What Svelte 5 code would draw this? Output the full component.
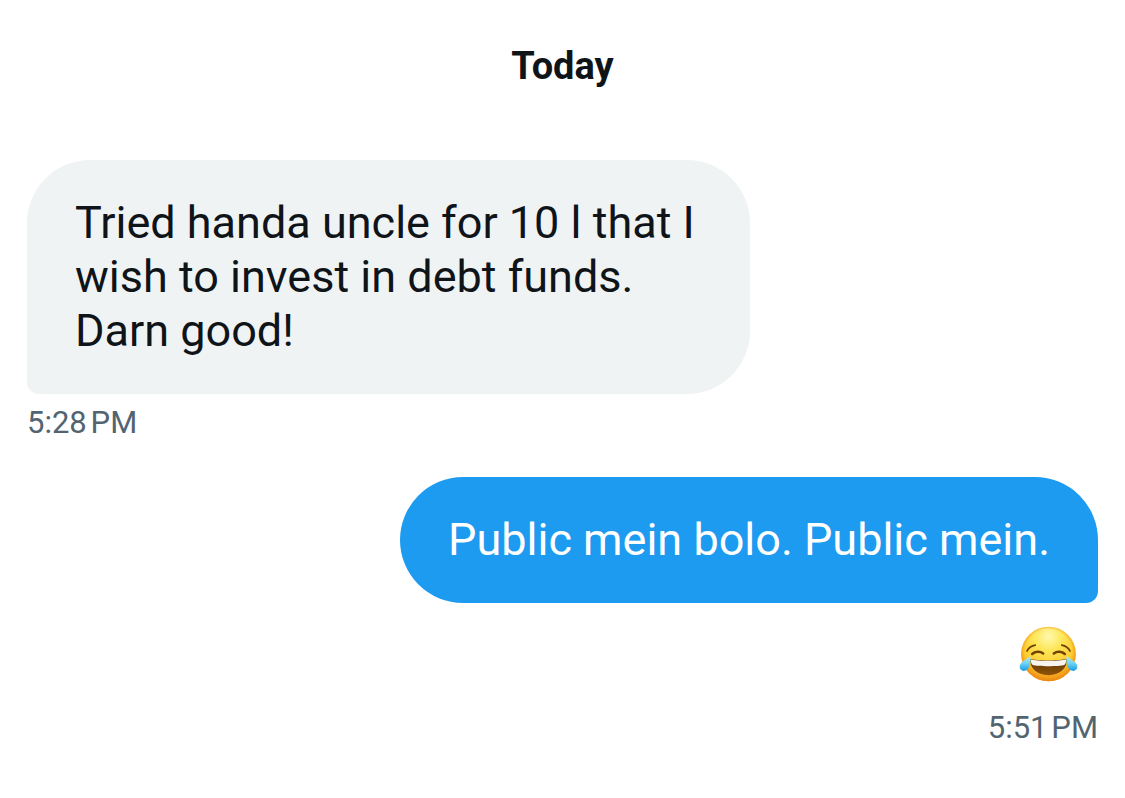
<script lang="ts">
    type Message = {
        id: number;
        own: boolean;
        text?: string;
        emoji?: boolean;
        time?: string;
    };

    export let day = "Today";

    // times carry a narrow no-break space before AM/PM
    export let messages: Message[] = [
        {
            id: 1,
            own: false,
            text: "Tried handa uncle for 10 l that I wish to invest in debt funds. Darn good!",
            time: "5:28\u202fPM",
        },
        { id: 2, own: true, text: "Public mein bolo. Public mein." },
        { id: 3, own: true, emoji: true, time: "5:51\u202fPM" },
    ];
</script>

<main class="conversation">
    <h1 class="day">{day}</h1>

    <ol class="messages">
        {#each messages as message (message.id)}
            <li class="message" class:own={message.own} class:reaction={message.emoji}>
                {#if message.emoji}
                    <svg class="emoji" viewBox="0 0 60 60" role="img" aria-label="Face with tears of joy">
                        <defs>
                            <radialGradient id="face" cx="50%" cy="18%" r="84%">
                                <stop offset="0" stop-color="#fff9b0" />
                                <stop offset="0.3" stop-color="#fee75a" />
                                <stop offset="0.65" stop-color="#fdcb2f" />
                                <stop offset="1" stop-color="#ee8b12" />
                            </radialGradient>
                            <radialGradient id="rim" cx="50%" cy="48%" r="52%">
                                <stop offset="0.82" stop-color="#f39a1b" stop-opacity="0" />
                                <stop offset="1" stop-color="#e9850f" stop-opacity="0.8" />
                            </radialGradient>
                            <linearGradient id="mouth" x1="0" y1="0" x2="0" y2="1">
                                <stop offset="0" stop-color="#5b3305" />
                                <stop offset="1" stop-color="#8f5407" />
                            </linearGradient>
                            <linearGradient id="tear" x1="0" y1="0" x2="0" y2="1">
                                <stop offset="0" stop-color="#b5ecf5" />
                                <stop offset="0.5" stop-color="#6dd2f4" />
                                <stop offset="1" stop-color="#149de6" />
                            </linearGradient>
                        </defs>
                        <circle cx="29.5" cy="30" r="27.3" fill="url(#face)" />
                        <circle cx="29.5" cy="30" r="27.3" fill="url(#rim)" />
                        <g fill="none" stroke="#6f4205" stroke-linecap="round">
                            <path d="M8 27C9.6 24.2 12.6 21.8 16.2 21.2" stroke-width="1.7" />
                            <path d="M51 27C49.4 24.2 46.4 21.8 42.8 21.2" stroke-width="1.7" />
                            <path d="M13.2 30C16 27.2 21 27 24.2 29.4" stroke-width="2.5" />
                            <path d="M34.8 29.4C38 27 43 27.2 45.8 30" stroke-width="2.5" />
                        </g>
                        <path
                            d="M11.4 34.8C17 37 42 37 47.6 34.8C48.8 43.5 41.3 51.2 29.5 51.2C17.7 51.2 10.2 43.5 11.4 34.8Z"
                            fill="url(#mouth)"
                        />
                        <path
                            d="M12.1 35.4C18.6 37.3 40.4 37.3 46.9 35.4C47.4 37.8 46.8 39.8 45.3 41C40 42.6 19 42.6 13.7 41C12.2 39.8 11.6 37.8 12.1 35.4Z"
                            fill="#f7f3ee"
                        />
                        <path
                            d="M11.2 32C12.2 37 11.4 45.4 5.8 46.8C2.2 47.4 0.2 44.8 0.8 41.6C1.6 37.8 7.2 35.8 11.2 32Z"
                            fill="url(#tear)"
                        />
                        <path
                            d="M47.8 32C46.8 37 47.6 45.4 53.2 46.8C56.8 47.4 58.8 44.8 58.2 41.6C57.4 37.8 51.8 35.8 47.8 32Z"
                            fill="url(#tear)"
                        />
                    </svg>
                {:else}
                    <p class="bubble">{message.text}</p>
                {/if}
                {#if message.time}
                    <time class="time">{message.time}</time>
                {/if}
            </li>
        {/each}
    </ol>
</main>

<style>
    :global(body) {
        margin: 0;
        background: #fff;
    }

    .conversation {
        padding: 42px 27px 48px;
        font-family: Roboto, "Liberation Sans", sans-serif;
        color: #0f1419;
    }

    .day {
        margin: 0 0 70px;
        font-size: 38px;
        font-weight: 700;
        line-height: 48px;
        text-align: center;
    }

    .messages {
        display: flex;
        flex-direction: column;
        gap: 36px;
        margin: 0;
        padding: 0;
        list-style: none;
    }

    .message {
        display: flex;
        flex-direction: column;
        align-items: flex-start;
    }
    .message.own {
        align-items: flex-end;
    }
    .message.reaction {
        margin-top: -15px;
    }

    .bubble {
        box-sizing: border-box;
        max-width: min(723px, 90%);
        margin: 0;
        padding: 36px 48px;
        border-radius: 63px 63px 63px 12px;
        background: #eff3f4;
        font-size: 45px;
        line-height: 54px;
    }
    .own .bubble {
        border-radius: 63px 63px 12px 63px;
        background: #1d9bf0;
        color: #fff;
    }

    .emoji {
        width: 60px;
        height: 60px;
        margin: 0 19px 15px;
    }

    .time {
        margin-top: 11px;
        font-size: 31px;
        line-height: 36px;
        color: #536471;
    }
</style>
